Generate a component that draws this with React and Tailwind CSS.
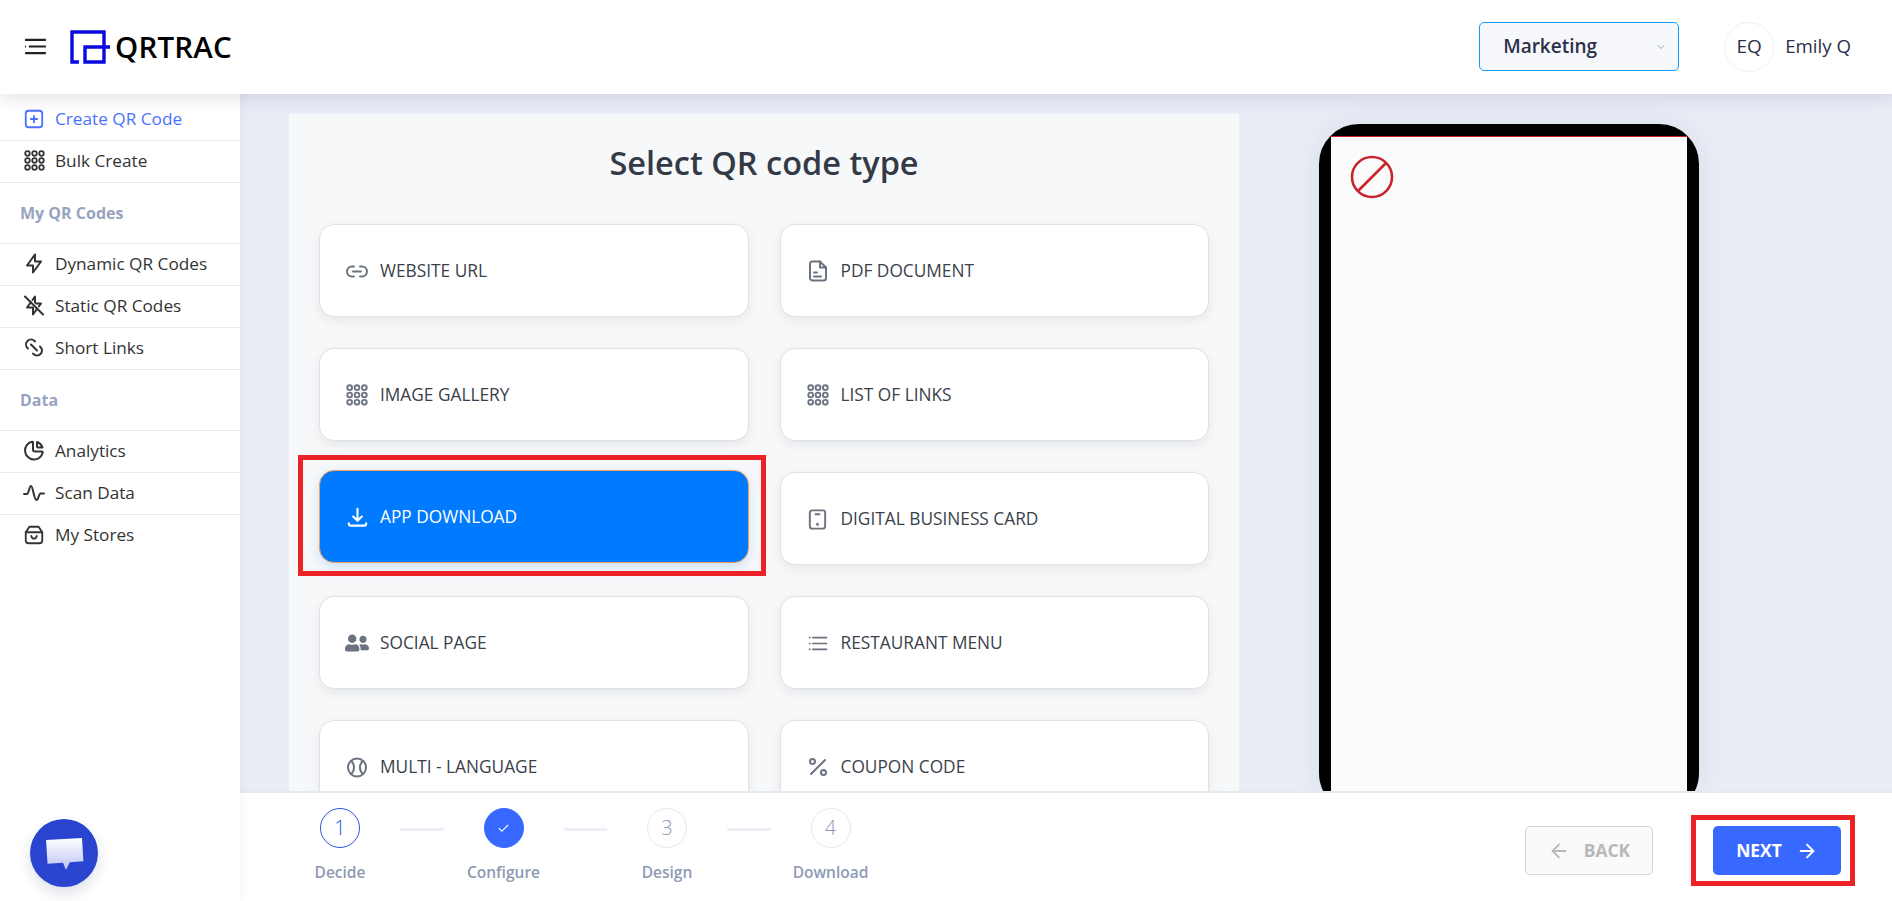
import { Link2, Percent, ArrowLeft, ArrowRight, ChevronDown, Check } from "lucide-react";
import { TbBolt, TbBoltOff, TbLink, TbChartPie, TbBallTennis } from "react-icons/tb";
import { FaUserFriends } from "react-icons/fa";

function DotsIcon({ className }) {
  const spots = [4, 12, 20];
  return (
    <svg viewBox="0 0 24 24" fill="none" stroke="currentColor" strokeWidth="2" className={className}>
      {spots.map((y) => spots.map((x) => <circle key={x + "-" + y} cx={x} cy={y} r="2.6" />))}
    </svg>
  );
}

function MenuIcon({ className }) {
  return (
    <svg viewBox="0 0 24 18" fill="none" stroke="currentColor" strokeWidth="2.2" className={className}>
      <path d="M1 2h22M5 9h18M1 16h22M1 9h1" />
    </svg>
  );
}

function PlusBoxIcon({ className }) {
  return (
    <svg viewBox="0 0 24 24" fill="none" stroke="currentColor" strokeWidth="2" strokeLinecap="round" className={className}>
      <rect x="3" y="3" width="18" height="18" rx="3" />
      <path d="M12 8.5v7M8.5 12h7" />
    </svg>
  );
}

function PulseIcon({ className }) {
  return (
    <svg viewBox="0 0 24 24" fill="none" stroke="currentColor" strokeWidth="2" strokeLinecap="round" strokeLinejoin="round" className={className}>
      <path d="M2 13h3c2 0 2-8 4-8s3 14 5.500 14c2 0 2-6 4-6.500h3.500" />
    </svg>
  );
}

function BagIcon({ className }) {
  return (
    <svg viewBox="0 0 24 24" fill="none" stroke="currentColor" strokeWidth="2" strokeLinecap="round" strokeLinejoin="round" className={className}>
      <path d="M7 3h10l4 6v9a3 3 0 0 1-3 3H6a3 3 0 0 1-3-3V9l4-6z" />
      <path d="M3 9h18M9 13c.5 2 1.500 3 3 3s2.500-1 3-3" />
    </svg>
  );
}

function FileIcon({ className }) {
  return (
    <svg viewBox="0 0 24 24" fill="none" stroke="currentColor" strokeWidth="2" strokeLinecap="round" strokeLinejoin="round" className={className}>
      <path d="M6 2.500h8l6 6V19a2.500 2.500 0 0 1-2.500 2.500h-11A2.500 2.500 0 0 1 4 19V4.500a2 2 0 0 1 2-2z" />
      <path d="M14 2.500V8.500h6M8 13.500h3M8 17.500h7" />
    </svg>
  );
}

function CardIcon({ className }) {
  return (
    <svg viewBox="0 0 24 24" fill="none" stroke="currentColor" strokeWidth="2" strokeLinecap="round" className={className}>
      <rect x="4" y="2.500" width="16" height="19" rx="2.500" />
      <path d="M10 6.500h4" />
      <circle cx="12" cy="17" r=".6" />
    </svg>
  );
}

function ListIcon({ className }) {
  return (
    <svg viewBox="0 0 24 18" fill="none" stroke="currentColor" strokeWidth="2" className={className}>
      <path d="M5 2h18M5 9h18M5 16h18M1 2h2M1 9h2M1 16h2" />
    </svg>
  );
}

function TrayDownIcon({ className }) {
  return (
    <svg viewBox="0 0 24 24" fill="none" stroke="currentColor" strokeWidth="2.200" strokeLinecap="round" strokeLinejoin="round" className={className}>
      <path d="M12 3v12M7.500 11l4.500 4.500 4.500-4.500" />
      <path d="M3 18v1a1.500 1.500 0 0 0 1.500 1.500h15A1.500 1.500 0 0 0 21 19v-1" />
    </svg>
  );
}

function SideRow({ icon, label, first, last }) {
  return (
    <div
      className={
        "flex items-center gap-[9px] pl-[22px] text-[17.2px] " +
        (last ? "" : "border-b border-[#e9ebf4] ") +
        (first ? "h-[47px] pt-[3px] text-[#4a72ff]" : "h-[42px] pb-[2px] text-[#333333]")
      }
    >
      <span className="flex w-[24px] shrink-0 justify-center">{icon}</span>
      <span>{label}</span>
    </div>
  );
}

function SideHeading({ label }) {
  return (
    <div className="flex h-[61px] items-center border-b border-[#e9ebf4] pl-[20px] text-[16px] font-bold text-[#98a4bf]">
      {label}
    </div>
  );
}

function TypeCard({ icon, label, selected }) {
  return (
    <div
      className={
        "flex h-[93px] items-center gap-[11px] rounded-[15px] border pl-[25px] pt-[1px] text-[17.3px] " +
        (selected
          ? "-translate-y-0.5 border-[#f0a050] bg-[#007bff] text-white shadow-[0_4px_12px_rgba(0,123,255,0.18)]"
          : "border-[#dfe1e8] bg-white text-[#3a3f4a] shadow-[0_4px_12px_rgba(0,0,0,0.07)]")
      }
    >
      <span className={"flex w-[24px] justify-center " + (selected ? "text-white" : "text-[#6b7280]")}>{icon}</span>
      <span>{label}</span>
    </div>
  );
}

function Step({ number, label, state }) {
  return (
    <div className="flex w-[100px] flex-col items-center">
      <div
        className={
          "flex h-[40px] w-[40px] items-center justify-center rounded-full border text-[20px] font-light " +
          (state === "done"
            ? "border-[#3768ff] bg-[#3768ff] text-white"
            : state === "current"
              ? "border-[#2f55d4] bg-white text-[#2f55d4]"
              : "border-[#e6e9f2] bg-white text-[#8e9ab5]")
        }
      >
        {state === "done" ? <Check size={13} strokeWidth={2} /> : number}
      </div>
      <span className="mt-[14px] whitespace-nowrap text-[15.5px] font-semibold leading-[20px] text-[#8e9ab5]">{label}</span>
    </div>
  );
}

function Connector() {
  return <div className="mx-[10px] mt-[20px] h-[3px] w-[43.5px] bg-[#edeff6]" />;
}

export default function App() {
  return (
    <div className="relative flex h-[901px] w-[1892px] flex-col overflow-hidden bg-white font-['Open_Sans',sans-serif]">
      {/* Top bar */}
      <header className="relative z-20 flex h-[94px] shrink-0 items-center bg-white pb-[1px] pl-[24px] pr-[41px] shadow-[0_2px_18px_rgba(30,40,80,0.16)]">
        <MenuIcon className="h-[17px] w-[23px] text-[#222222]" />
        <svg viewBox="0 0 40 34" fill="none" stroke="#0a0ae0" strokeWidth="3.400" className="ml-[23px] h-[34px] w-[40px]">
          <path d="M9 32H2V2h32v15H15v15h19V17h6" />
        </svg>
        <span className="ml-[5px] text-[29.5px] font-semibold leading-none tracking-[0.2px] text-black">QRTRAC</span>
        <div className="ml-auto flex h-[49px] w-[200px] items-center justify-between rounded-[5px] border border-[#0d9bff] bg-[#f7f8fc] pl-[23px] pr-[11px] text-[19px] font-semibold text-[#2b2f4a]">
          <span>Marketing</span>
          <ChevronDown size={12} className="text-[#98a2b8]" />
        </div>
        <div className="ml-[45px] flex h-[50px] w-[50px] items-center justify-center rounded-full border border-[#eef0f6] text-[19px] text-[#2b2f4a]">
          EQ
        </div>
        <span className="ml-[11px] text-[18.7px] text-[#2b2f4a]">Emily Q</span>
      </header>

      <div className="flex min-h-0 flex-1">
        {/* Sidebar */}
        <aside className="relative z-10 flex w-[240px] shrink-0 flex-col bg-white shadow-[2px_0_8px_rgba(30,40,80,0.05)]">
          <SideRow first icon={<PlusBoxIcon className="h-[22px] w-[22px]" />} label="Create QR Code" />
          <SideRow icon={<DotsIcon className="h-[21px] w-[21px]" />} label="Bulk Create" />
          <SideHeading label="My QR Codes" />
          <SideRow icon={<TbBolt className="h-[25px] w-[25px]" />} label="Dynamic QR Codes" />
          <SideRow icon={<TbBoltOff className="h-[25px] w-[25px]" />} label="Static QR Codes" />
          <SideRow icon={<TbLink className="h-[25px] w-[25px] -scale-x-100" />} label="Short Links" />
          <SideHeading label="Data" />
          <SideRow icon={<TbChartPie className="h-[25px] w-[25px]" />} label="Analytics" />
          <SideRow icon={<PulseIcon className="h-[24px] w-[24px]" />} label="Scan Data" />
          <SideRow last icon={<BagIcon className="h-[22px] w-[22px]" />} label="My Stores" />
          <div className="absolute left-[30px] top-[725px] flex h-[68px] w-[68px] items-center justify-center rounded-full bg-[#2a44d0] shadow-[0_6px_14px_rgba(30,40,80,0.15)]">
            <svg viewBox="0 0 40 34" className="h-[33px] w-[39px]">
              <defs>
                <linearGradient id="chatFill" x1="0" y1="0" x2="0" y2="1">
                  <stop offset="0" stopColor="#ffffff" />
                  <stop offset="1" stopColor="#bcc3f0" />
                </linearGradient>
              </defs>
              <path d="M1 3l37-2 1.500 24-14 1-4 8-3-7.500-16 1z" fill="url(#chatFill)" />
            </svg>
          </div>
        </aside>

        <div className="flex min-w-0 flex-1 flex-col">
          {/* Content */}
          <main className="flex min-h-0 flex-1 items-start overflow-hidden bg-[#e9edf6] pl-[49px] pt-[20px]">
            <section className="w-[950px] shrink-0 bg-[#f7f8fa] px-[30px]">
              <h1 className="flex h-[110px] items-center justify-center pb-[12px] text-[32.5px] font-semibold text-[#333a45]">
                Select QR code type
              </h1>
              <div className="grid grid-cols-2 gap-x-[31px] gap-y-[31px]">
                <TypeCard icon={<Link2 className="h-[25px] w-[25px]" />} label="WEBSITE URL" />
                <TypeCard icon={<FileIcon className="h-[24px] w-[24px]" />} label="PDF DOCUMENT" />
                <TypeCard icon={<DotsIcon className="h-[22px] w-[22px]" />} label="IMAGE GALLERY" />
                <TypeCard icon={<DotsIcon className="h-[22px] w-[22px]" />} label="LIST OF LINKS" />
                <TypeCard selected icon={<TrayDownIcon className="h-[23px] w-[23px]" />} label="APP DOWNLOAD" />
                <TypeCard icon={<CardIcon className="h-[23px] w-[23px]" />} label="DIGITAL BUSINESS CARD" />
                <TypeCard icon={<FaUserFriends className="h-[24px] w-[24px]" />} label="SOCIAL PAGE" />
                <TypeCard icon={<ListIcon className="h-[15px] w-[20px]" />} label="RESTAURANT MENU" />
                <TypeCard icon={<TbBallTennis className="h-[25px] w-[25px]" />} label="MULTI - LANGUAGE" />
                <TypeCard icon={<Percent className="h-[26px] w-[26px]" />} label="COUPON CODE" />
              </div>
            </section>
            <div className="ml-[80px] mt-[10px] h-[689px] w-[380px] shrink-0 rounded-[40px] border-[12px] border-black shadow-[0_0_30px_rgba(30,40,80,0.08)]">
              <div className="h-full border-t border-[#d0222a] bg-[#fbfbfb] pl-[19px] pt-[18px]">
                <svg viewBox="0 0 44 44" fill="none" stroke="#c9252d" strokeWidth="2.600" className="h-[44px] w-[44px]">
                  <circle cx="22" cy="22" r="20" />
                  <path d="M36 8L8 36" />
                </svg>
              </div>
            </div>
          </main>

          {/* Wizard footer */}
          <footer className="flex h-[110px] shrink-0 items-start border-t-2 border-[#e6e8ef] bg-white pl-[50px] pr-[51px] pt-[15px]">
            <Step number="1" label="Decide" state="current" />
            <Connector />
            <Step number="2" label="Configure" state="done" />
            <Connector />
            <Step number="3" label="Design" />
            <Connector />
            <Step number="4" label="Download" />
            <div className="ml-auto mt-[18px] flex gap-[60px]">
              <button className="flex h-[49px] w-[128px] items-center justify-center gap-[14px] rounded-[5px] border border-[#d6d6d6] bg-[#fafafa] text-[17.4px] font-bold text-[#b8b8b8]">
                <ArrowLeft size={22} />
                BACK
              </button>
              <button className="flex h-[49px] w-[128px] items-center justify-center gap-[14px] rounded-[5px] bg-[#3768ff] text-[17.4px] font-bold text-white">
                NEXT
                <ArrowRight size={22} />
              </button>
            </div>
          </footer>
        </div>
      </div>

      {/* Red annotation boxes drawn over the page */}
      <div className="absolute left-[298px] top-[455px] z-30 h-[121px] w-[468px] border-[5px] border-[#ec2227]" />
      <div className="absolute left-[1691px] top-[815px] z-30 h-[71px] w-[164px] border-[5px] border-[#ec2227]" />
    </div>
  );
}
